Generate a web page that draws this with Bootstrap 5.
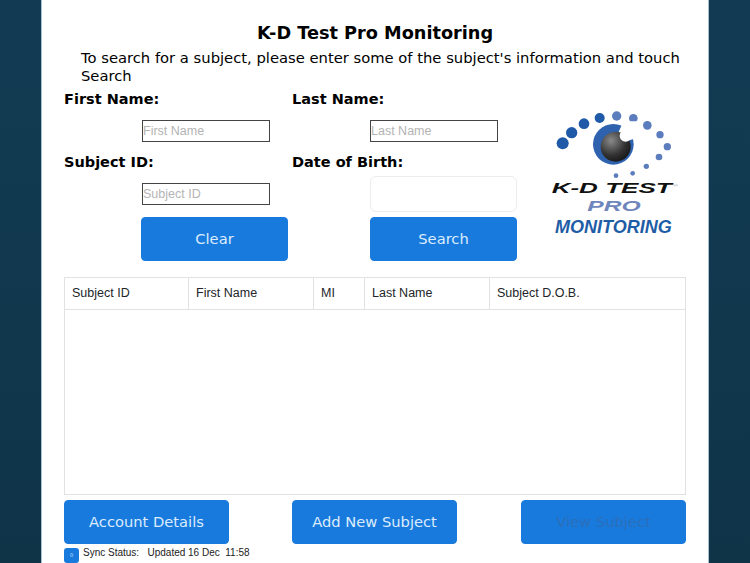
<!DOCTYPE html>
<html lang="en">
<head>
    <meta charset="UTF-8">
    <meta name="viewport" content="width=device-width, initial-scale=1.0">
    <title>K-D Test Pro Monitoring</title>
    <link href="https://cdn.jsdelivr.net/npm/bootstrap@5.3.0/dist/css/bootstrap.min.css" rel="stylesheet">
    <script src="https://cdn.jsdelivr.net/npm/bootstrap@5.3.0/dist/js/bootstrap.bundle.min.js"></script>
    <style>
        html, body {
            height: 563px;
            overflow: hidden;
        }
        body {
            background: linear-gradient(180deg, #123b53, #0f3448);
            font-family: "DejaVu Sans", Verdana, sans-serif;
            color: #000;
        }
        .panel {
            width: 668px;
            height: 563px;
            margin-left: 41px;
            padding: 0 22px;
            background: #fff;
            border-left: 1px solid #a9c2d0;
            border-right: 1px solid #a9c2d0;
        }
        .page-title {
            font-size: 17.7px;
            font-weight: 700;
            line-height: 24px;
            padding-top: 21px;
            margin: 0;
            text-align: center;
        }
        .intro {
            font-size: 14.75px;
            line-height: 18px;
            margin: 4px 0 0 17px;
        }
        .search-area {
            height: 188px;
            margin-top: 4px;
        }
        .field-col {
            width: 228px;
            flex: none;
        }
        .field-label {
            font-size: 14.5px;
            font-weight: 700;
            line-height: 20px;
            margin: 0;
        }
        .field-box {
            margin-left: 77px;
        }
        .second-col .field-box {
            margin-left: 78px;
        }
        .name-box {
            margin-top: 11px;
        }
        .second-label {
            margin-top: 10.5px;
        }
        .id-box {
            margin-top: 11px;
        }
        .clear-box {
            margin-top: 12.5px;
        }
        .dob-box {
            margin-top: 4px;
        }
        .search-box {
            margin-top: 5px;
        }
        .text-field {
            display: block;
            width: 128px;
            height: 21.5px;
            padding: 0;
            border: 1px solid #444;
            border-radius: 0;
            font-family: "Liberation Sans", Arial, sans-serif;
            font-size: 12.5px;
            outline: none;
        }
        .field-col:first-child .text-field {
            margin-left: 1px;
        }
        .text-field::placeholder {
            color: #b4b4b4;
        }
        .date-field {
            display: block;
            width: 147px;
            height: 36px;
            border: 1px solid #ececec;
            border-radius: 6px;
            background: #fff;
        }
        .action-btn {
            --bs-btn-bg: #197ade;
            --bs-btn-border-color: #197ade;
            --bs-btn-color: #dcecfb;
            --bs-btn-hover-bg: #156bc4;
            --bs-btn-hover-border-color: #156bc4;
            --bs-btn-hover-color: #fff;
            --bs-btn-disabled-bg: #197ade;
            --bs-btn-disabled-border-color: #197ade;
            --bs-btn-disabled-color: #2a6fb8;
            --bs-btn-disabled-opacity: 1;
            --bs-btn-border-radius: 4px;
            height: 44px;
            padding: 0;
            font-size: 14.7px;
        }
        .search-btn {
            width: 147px;
            display: block;
        }
        .foot-btn {
            width: 165px;
        }
        .logo-box {
            width: 170px;
            flex: none;
            margin-left: 10px;
            margin-top: 1px;
        }
        .logo-box svg {
            display: block;
        }
        .logo-kd {
            font-family: "Liberation Sans", Arial, sans-serif;
            font-size: 44px;
            font-weight: 700;
            font-style: italic;
            fill: #111;
        }
        .logo-reg {
            font-family: "Liberation Sans", Arial, sans-serif;
            font-size: 9px;
            fill: #888;
        }
        .logo-pro {
            font-family: "Liberation Sans", Arial, sans-serif;
            font-size: 44px;
            font-weight: 700;
            font-style: italic;
            fill: #6f86bd;
        }
        .logo-mon {
            font-family: "Liberation Sans", Arial, sans-serif;
            font-size: 54px;
            font-weight: 700;
            font-style: italic;
            fill: #1f5da6;
        }
        .subject-table {
            --bs-table-border-color: #e2e2e2;
            table-layout: fixed;
            width: 622px;
            margin: 0;
            font-family: "Liberation Sans", Arial, sans-serif;
            font-size: 12.5px;
        }
        .subject-table th {
            font-weight: 400;
            height: 32px;
            padding: 0 7px;
            vertical-align: middle;
        }
        .subject-table .empty-row td {
            height: 185px;
        }
        .foot-row {
            margin-top: 5px;
        }
        .mid-gap {
            margin: 0 64px 0 63px;
        }
        .sync-row {
            margin-top: 4px;
            height: 15px;
        }
        .sync-dot {
            width: 15px;
            height: 15px;
            border-radius: 3px;
            background: #197ade;
            color: #cfe3f8;
            font-size: 5px;
            line-height: 15px;
            text-align: center;
        }
        .sync-text {
            font-family: "Liberation Sans", Arial, sans-serif;
            font-size: 10px;
            line-height: 12px;
            margin-left: 4px;
            margin-top: -1px;
            white-space: pre;
            color: #222;
        }
    </style>
</head>
<body>
    <div class="panel">
        <h1 class="page-title">K-D Test Pro Monitoring</h1>
        <p class="intro">To search for a subject, please enter some of the subject's information and touch Search</p>

        <div class="search-area d-flex">
            <div class="field-col">
                <p class="field-label">First Name:</p>
                <div class="field-box name-box">
                    <input type="text" class="text-field" placeholder="First Name">
                </div>
                <p class="field-label second-label">Subject ID:</p>
                <div class="field-box id-box">
                    <input type="text" class="text-field" placeholder="Subject ID">
                </div>
                <div class="field-box clear-box">
                    <button type="button" class="btn action-btn search-btn">Clear</button>
                </div>
            </div>
            <div class="field-col second-col">
                <p class="field-label">Last Name:</p>
                <div class="field-box name-box">
                    <input type="text" class="text-field" placeholder="Last Name">
                </div>
                <p class="field-label second-label">Date of Birth:</p>
                <div class="field-box dob-box">
                    <div class="date-field"></div>
                </div>
                <div class="field-box search-box">
                    <button type="button" class="btn action-btn search-btn">Search</button>
                </div>
            </div>
            <div class="logo-box">
                <svg width="170" height="160" viewBox="0 0 510 480">
                    <defs>
                        <radialGradient id="pupil" cx="0.35" cy="0.3" r="0.8">
                            <stop offset="0" stop-color="#8a8a8a"/>
                            <stop offset="0.6" stop-color="#333"/>
                            <stop offset="1" stop-color="#111"/>
                        </radialGradient>
                    </defs>
                    <g fill="#1f5aa8">
                        <circle cx="98" cy="160" r="18"/>
                        <circle cx="125" cy="128" r="17"/>
                        <circle cx="162" cy="101" r="16"/>
                        <circle cx="209" cy="84" r="15"/>
                    </g>
                    <g fill="#5c7dbd">
                        <circle cx="260" cy="78" r="14"/>
                        <circle cx="310" cy="85" r="13"/>
                        <circle cx="352" cy="106" r="13"/>
                        <circle cx="390" cy="134" r="11"/>
                        <circle cx="412" cy="170" r="11"/>
                        <circle cx="387" cy="201" r="10"/>
                        <circle cx="349" cy="229" r="8"/>
                        <circle cx="308" cy="250" r="7"/>
                        <circle cx="258" cy="257" r="7"/>
                    </g>
                    <circle cx="250" cy="163" r="61" fill="#2f62ae"/>
                    <polygon points="250,163 280,94 332,94 332,142" fill="#fff"/>
                    <circle cx="257" cy="170" r="45" fill="url(#pupil)"/>
                    <circle cx="287" cy="137" r="18" fill="#fff"/>
                    <text class="logo-kd" x="65" y="310" textLength="360" lengthAdjust="spacingAndGlyphs">K-D TEST</text>
                    <text class="logo-reg" x="430" y="290">®®</text>
                    <text class="logo-pro" x="172" y="364" textLength="160" lengthAdjust="spacingAndGlyphs">PRO</text>
                    <text class="logo-mon" x="75" y="428" textLength="350" lengthAdjust="spacingAndGlyphs">MONITORING</text>
                </svg>
            </div>
        </div>

        <table class="table table-bordered subject-table">
            <colgroup>
                <col style="width:124px">
                <col style="width:125px">
                <col style="width:51px">
                <col style="width:125px">
                <col>
            </colgroup>
            <thead>
                <tr>
                    <th>Subject ID</th>
                    <th>First Name</th>
                    <th>MI</th>
                    <th>Last Name</th>
                    <th>Subject D.O.B.</th>
                </tr>
            </thead>
            <tbody>
                <tr class="empty-row"><td colspan="5"></td></tr>
            </tbody>
        </table>

        <div class="foot-row d-flex">
            <button type="button" class="btn action-btn foot-btn">Account Details</button>
            <button type="button" class="btn action-btn foot-btn mid-gap">Add New Subject</button>
            <button type="button" class="btn action-btn foot-btn" disabled>View Subject</button>
        </div>

        <div class="sync-row d-flex">
            <div class="sync-dot">0</div>
            <div class="sync-text">Sync Status:   Updated 16 Dec  11:58</div>
        </div>
    </div>
</body>
</html>
